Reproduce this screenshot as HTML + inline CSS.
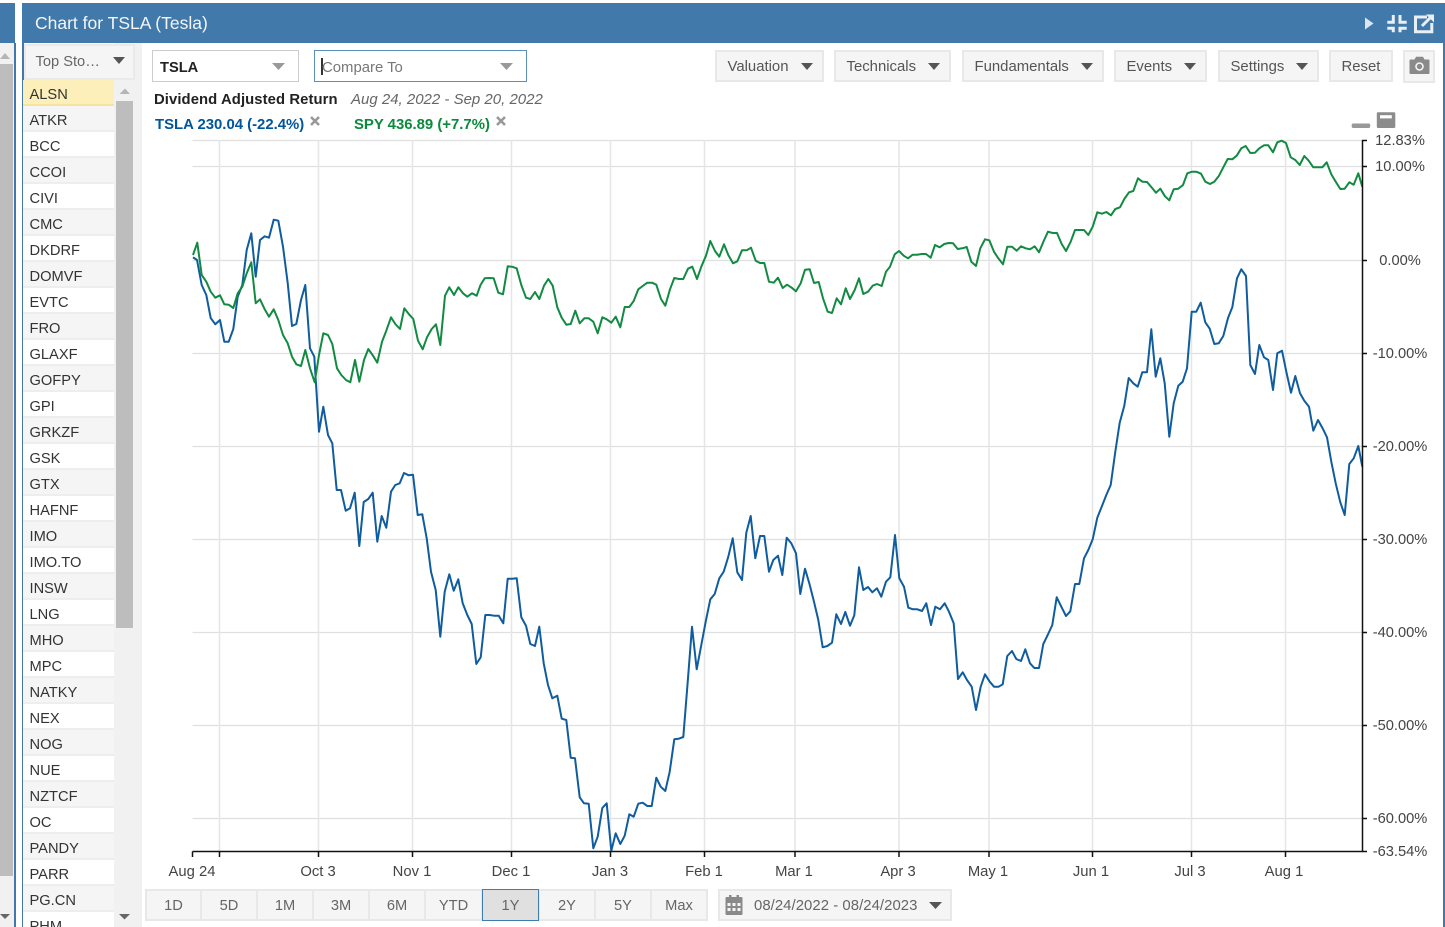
<!DOCTYPE html>
<html><head><meta charset="utf-8"><title>Chart for TSLA</title>
<style>
html,body{margin:0;padding:0;background:#fff;width:1445px;height:927px;overflow:hidden}
#w{width:1445px;height:927px;overflow:hidden;position:relative;font-family:"Liberation Sans",Arial,sans-serif;font-size:14.67px;color:#444}
.a{position:absolute;box-sizing:border-box}
.t{position:absolute;white-space:nowrap;line-height:18px}
.btn{position:absolute;box-sizing:border-box;top:50px;height:32px;background:#f5f5f5;border:2px solid #e8e8e8;color:#555;line-height:30px;padding-left:10.5px;white-space:nowrap;font-size:14.9px}
.btn i{position:absolute;top:11px;right:9px;width:0;height:0;border-left:6.5px solid transparent;border-right:6.5px solid transparent;border-top:7px solid #555}
.row{position:absolute;left:23px;width:91px;height:26px;box-sizing:border-box;border-bottom:2px solid #eee;padding-left:6.5px;line-height:31px;color:#333;background:#fff}
.row.o{background:#f5f5f5}
.rg{position:absolute;box-sizing:border-box;top:889px;height:32px;background:#f5f5f5;border:2px solid #e8e8e8;border-left-width:1px;border-right-width:1px;color:#666;text-align:center;line-height:30px}
.xl{position:absolute;top:863px;width:80px;text-align:center;line-height:18px;color:#444;font-size:14.8px}
.yl{position:absolute;left:1360px;width:80px;text-align:center;line-height:18px;color:#444}
</style></head><body><div id="w">

<!-- left sliver -->
<div class="a" style="left:0;top:3px;width:15px;height:40px;background:#4179ab"></div>
<div class="a" style="left:0;top:43px;width:14px;height:884px;background:#f1f1f1"></div>
<div class="a" style="left:14px;top:43px;width:1.5px;height:884px;background:#4179ab"></div>
<div class="a" style="left:0;top:64px;width:13px;height:812px;background:#bdbdbd"></div>
<svg class="a" style="left:0;top:50px" width="14" height="12"><path d="M0 9 L5 3 L10 9Z" fill="#b5b5b5"/></svg>
<svg class="a" style="left:0;top:912px" width="14" height="12"><path d="M0 2 L10 2 L5 7Z" fill="#666"/></svg>

<!-- main frame -->
<div class="a" style="left:22px;top:3px;width:1423px;height:40px;background:#4179ab"></div>
<div class="a" style="left:22px;top:43px;width:1.5px;height:884px;background:#4179ab"></div>
<div class="a" style="left:1443px;top:43px;width:1.5px;height:884px;background:#4179ab"></div>
<div class="t" style="left:35px;top:13px;font-size:17.5px;line-height:20px;color:#f2f6fa">Chart for TSLA (Tesla)</div>
<svg class="a" style="left:1360px;top:10px" width="80" height="28">
<path d="M5 7.5 L13.5 13.5 L5 19.5Z" fill="#dce6ef"/>
<g fill="none" stroke="#e8eff5" stroke-width="3">
<path d="M33.3 5 V12.3 H27.3"/><path d="M40 5 V12.3 H46.7"/><path d="M27.3 18.3 H33.3 V22.3"/><path d="M46.7 18.3 H40 V22.3"/>
<path d="M67 7 H55.5 V21.7 H71.8 V13"/></g>
<path d="M62 16 L71 7" stroke="#e8eff5" stroke-width="3" fill="none"/>
<path d="M66 4.5 H74 V12.5Z" fill="#e8eff5"/>
</svg>

<!-- sidebar -->
<div class="a" style="left:114px;top:43px;width:28px;height:884px;background:#f1f1f1"></div>
<div class="a" style="left:23.5px;top:44px;width:111px;height:36px;background:#f5f5f5;border:2px solid #eaeaea"></div>
<div class="t" style="left:35.5px;top:53px;color:#666">Top Sto…</div>
<svg class="a" style="left:112px;top:56px" width="14" height="9"><path d="M1 1H13L7 8Z" fill="#555"/></svg>
<div class="a" style="left:116px;top:101px;width:17px;height:527px;background:#bdbdbd"></div>
<svg class="a" style="left:118px;top:86px" width="14" height="10"><path d="M1.5 8 L7 2.5 L12 8Z" fill="#b5b5b5"/></svg>
<svg class="a" style="left:118px;top:912px" width="14" height="10"><path d="M1 2 L12 2 L6.5 7.5Z" fill="#666"/></svg>

<div class="row" style="top:80px;background:#fdefb9;border-bottom-color:#f7e3a0">ALSN</div>
<div class="row o" style="top:106px">ATKR</div>
<div class="row" style="top:132px">BCC</div>
<div class="row o" style="top:158px">CCOI</div>
<div class="row" style="top:184px">CIVI</div>
<div class="row o" style="top:210px">CMC</div>
<div class="row" style="top:236px">DKDRF</div>
<div class="row o" style="top:262px">DOMVF</div>
<div class="row" style="top:288px">EVTC</div>
<div class="row o" style="top:314px">FRO</div>
<div class="row" style="top:340px">GLAXF</div>
<div class="row o" style="top:366px">GOFPY</div>
<div class="row" style="top:392px">GPI</div>
<div class="row o" style="top:418px">GRKZF</div>
<div class="row" style="top:444px">GSK</div>
<div class="row o" style="top:470px">GTX</div>
<div class="row" style="top:496px">HAFNF</div>
<div class="row o" style="top:522px">IMO</div>
<div class="row" style="top:548px">IMO.TO</div>
<div class="row o" style="top:574px">INSW</div>
<div class="row" style="top:600px">LNG</div>
<div class="row o" style="top:626px">MHO</div>
<div class="row" style="top:652px">MPC</div>
<div class="row o" style="top:678px">NATKY</div>
<div class="row" style="top:704px">NEX</div>
<div class="row o" style="top:730px">NOG</div>
<div class="row" style="top:756px">NUE</div>
<div class="row o" style="top:782px">NZTCF</div>
<div class="row" style="top:808px">OC</div>
<div class="row o" style="top:834px">PANDY</div>
<div class="row" style="top:860px">PARR</div>
<div class="row o" style="top:886px">PG.CN</div>
<div class="row" style="top:912px">PHM</div>

<!-- inputs -->
<div class="a" style="left:152px;top:50px;width:147px;height:32px;border:1.5px solid #ccc;background:#fff"></div>
<div class="t" style="left:160px;top:59px;font-weight:bold;color:#222">TSLA</div>
<svg class="a" style="left:271px;top:62px" width="14" height="9"><path d="M1 1H14L7.5 8Z" fill="#999"/></svg>
<div class="a" style="left:314px;top:50px;width:213px;height:32px;border:1.5px solid #5a8ebc;background:#fff"></div>
<div class="a" style="left:321px;top:58px;width:1.5px;height:17px;background:#333"></div>
<div class="t" style="left:322px;top:59px;color:#777;font-size:14.9px">Compare To</div>
<svg class="a" style="left:499px;top:62px" width="14" height="9"><path d="M1 1H14L7.5 8Z" fill="#999"/></svg>

<!-- toolbar -->
<div class="btn" style="left:715px;width:109px">Valuation<i></i></div>
<div class="btn" style="left:834px;width:117px">Technicals<i></i></div>
<div class="btn" style="left:962px;width:142px">Fundamentals<i></i></div>
<div class="btn" style="left:1114px;width:93px">Events<i></i></div>
<div class="btn" style="left:1218px;width:101px">Settings<i></i></div>
<div class="btn" style="left:1329px;width:64px">Reset</div>
<div class="btn" style="left:1403px;width:32px;height:33px"></div>
<svg class="a" style="left:1409px;top:56px" width="21" height="19"><path d="M1.5 3.5H5.5L7 .8H14L15.5 3.5H19.5Q20.5 3.5 20.5 4.5V17Q20.5 18 19.5 18H1.5Q.5 18 .5 17V4.5Q.5 3.5 1.5 3.5Z" fill="#8a8a8a"/><circle cx="10.5" cy="10.5" r="4.3" fill="#f5f5f5"/><circle cx="10.5" cy="10.5" r="2.7" fill="#8a8a8a"/></svg>

<!-- legend -->
<div class="t" style="left:154px;top:91px;font-weight:bold;color:#222;font-size:14.83px;letter-spacing:.09px">Dividend Adjusted Return</div>
<div class="t" style="left:351px;top:91px;font-style:italic;color:#666;font-size:15px">Aug 24, 2022 - Sep 20, 2022</div>
<div class="t" style="left:155px;top:116px;font-weight:bold;color:#00559c;font-size:14.9px">TSLA 230.04 (-22.4%)</div>
<div class="t" style="left:354px;top:116px;font-weight:bold;color:#0a8a3c;font-size:14.9px">SPY 436.89 (+7.7%)</div>
<svg class="a" style="left:309px;top:115px" width="12" height="12"><path d="M2 2L10 10M10 2L2 10" stroke="#999" stroke-width="2.6"/></svg>
<svg class="a" style="left:495px;top:115px" width="12" height="12"><path d="M2 2L10 10M10 2L2 10" stroke="#999" stroke-width="2.6"/></svg>

<!-- chart -->
<svg class="a" style="left:0;top:0" width="1445" height="927">
<g stroke="#e0e0e0" stroke-width="1.3" fill="none">
<path d="M192.5 140.5H1362M192.5 166.5H1362M192.5 260.5H1362M192.5 353.5H1362M192.5 446.5H1362M192.5 539.5H1362M192.5 632.5H1362M192.5 725.5H1362M192.5 818.5H1362"/>
</g>
<g stroke="#e6e6e6" stroke-width="1.6" fill="none">
<path d="M219.5 140V852M318.5 140V852M412.5 140V852M511.5 140V852M610.5 140V852M704.5 140V852M795 140V852M899 140V852M989 140V852M1092.5 140V852M1191.5 140V852M1285.5 140V852"/>
</g>
<polyline fill="none" stroke="#0f5c9f" stroke-width="2" stroke-linejoin="round" points="193,257.3 197,260 201.7,285 206.3,295 210.7,318 215.3,324.3 220,320 224.3,341.7 228.7,341.7 233.3,329 237.7,296.7 242.3,285 246.7,250 251.3,233.3 255.7,276.7 260,240 264.7,236.3 269,237.7 273.7,219.7 278.3,220.7 283,246.7 287.7,283 292,326 296.3,324 301,300 305.3,285 310,348.3 314.3,356.7 319,431.7 323.3,406.7 328,435 332.3,443.3 336.7,490 341,490 345.7,510.7 350,508.3 354.7,492.7 359.3,546 363.7,502 368.3,499 372.7,492.7 377.3,541.7 381.7,516 386.3,527.7 391,491.7 395.3,485 399.7,483.3 404,473 408.7,475.3 413,474.7 417.7,515 422.3,514.3 426.7,538.3 431,571.7 435.7,590 440.3,636.7 444.7,591.7 449.3,574.3 453.7,590.7 458.3,579.3 462.7,603.3 467.3,615 471.7,624 476.3,664 480.7,657.3 485.3,615 489.7,615 494,615.7 498.7,615.7 503.3,623.3 507.7,578.7 512.3,578.7 516.7,578.3 521.3,617.3 526,625.7 530.3,644 535,646 539.3,626.7 543.7,663.3 548,685 552.3,698.3 557.3,695.7 561.7,718.7 566.3,720 570.7,757.7 575,758.3 579.7,797.3 584,803.3 588.7,803.7 593.3,848.3 597.7,836.7 602.3,808 606.7,803.3 611.3,850.7 615.7,833.3 620.3,844 624.7,835.7 629.3,814.3 633.7,816.7 638.3,803.7 642.7,802.7 647.3,806 651.7,806 656.3,777.7 660.7,786.7 665.3,791 669.7,771.7 674.3,739.3 678.7,738.7 683.3,737 687.7,682 692,626.7 696.7,669.3 701.3,645 705.7,621.7 710.3,599.3 714.7,594 719.3,578.3 723.7,571.7 728.3,556.7 732.7,538.3 737.3,572.3 742,580 746.3,532.7 750.7,516 755.3,558.3 760,536 764.3,536 769,571.7 773.3,560 778,555.7 782.3,575 786.7,537.7 791.3,543.3 796,553.3 800.3,594 805,568.7 809.3,583.3 814,601.7 818.3,620 822.7,647.3 827.3,646 832,642.7 836.3,614.3 841,624 845.3,612 850,625.7 854.3,615.3 859,567.3 863.3,590 868,587 872.3,592.3 877,588.3 881.3,596.7 886,581.7 890.3,577.3 895,535 899.3,578.3 904,586.7 908.3,607.7 913,609.3 917.3,609.3 922,611 926.3,603.3 931,625 935.3,606.7 940,609.3 944.7,603.3 949,611.7 953.7,623.3 958,679 962.7,672.3 967,680 971.7,686.7 976,710 980.7,686.7 985,674.3 989.7,681.7 994,686.7 998.7,686.7 1002.7,684.3 1007.3,656 1012,651 1016.3,659 1021,661 1025.3,649.3 1030,663.3 1034.3,668 1039,668 1043.3,644 1047.7,635 1052.3,625 1056.7,597.3 1061.3,606.7 1066,616 1070.3,611.3 1075,584 1079.3,584 1084,558.3 1088.3,550 1092.7,539.3 1097.3,517.7 1101.7,506.7 1106.3,495 1110.7,485 1115.3,451.7 1119.7,422.7 1124.3,405.7 1128.7,378 1133.3,383.3 1137.7,386.7 1142.3,372.3 1147,372.3 1151.3,329.3 1155.7,376.7 1160.3,358.3 1164.7,383.3 1169.3,436.7 1173.7,403.3 1178.3,385.7 1182.7,381.7 1187,368.3 1191.7,311.7 1196.3,311.7 1200.7,302.7 1205.3,322.3 1209.7,328.7 1214.3,344 1218.7,343.3 1223.3,336 1228,318 1232.3,307.3 1237,278.3 1241.3,269.3 1246,276 1250.3,365 1255,374 1259.3,345 1264,357.3 1268.3,360 1273,390 1277.3,353.3 1282,350.7 1286.3,371.7 1291,392.7 1295.3,376 1300,393.3 1304.3,400.7 1309,406.7 1313.3,430.7 1318,420 1322.3,427.7 1327,437.3 1331.3,461.7 1335.7,483.3 1340.3,502.3 1344.7,515 1349.3,464 1353.7,458.3 1358.3,446 1362.3,466.7"/>
<polyline fill="none" stroke="#128a42" stroke-width="2" stroke-linejoin="round" points="193,255 197.3,242.7 201.7,275 206.3,281.7 210.7,291.7 215.3,297.7 220,295.3 224.3,304.3 228.7,304.7 233.3,308 237.7,293.3 242.3,286.7 246.7,273.3 251.3,262.3 255.7,303.3 260,299.3 264.7,309.3 269,316.7 273.7,309.3 278.3,320 283,335 287.7,343.3 292,356.7 296.3,364.3 301,366 305.3,350 310,368.3 314.7,382.3 319,355 323.3,333.3 328,335 332.3,344 337,368.3 341.3,375 346,380 350.3,382.3 355,360 359.3,381.7 364,360 368.3,349 373,355.7 377.3,362.7 382,341.7 386.3,330.7 391,317.3 395.3,324 400,329 404.3,308.3 409,314.3 413.3,319 418,340.7 422.7,349.3 427,337.3 431.7,329 436,324.3 440.3,345 445,295.7 449.3,287.3 454,295 458.3,287.3 463,293.3 467.3,296.7 472,293.3 476.7,295.7 480.5,285 484.7,278.3 489,278 493.7,278.3 498.3,292.7 503,294.3 507.7,266.3 512,266.7 516.7,268.3 521.3,285 526,297.7 530.3,299 535,292 539.3,299 544,285.7 548.3,279 552.7,285.7 557.3,307.3 561.7,317.7 566.3,324.7 570.7,324 575.3,310.7 579.7,323.3 584.3,318.3 588.7,318.3 593.3,321.7 597.7,333.3 602.3,317.3 606.7,319.3 611.3,322.7 615.7,316.7 620.3,327.3 624.7,307 629.3,307 633.7,301 638.3,289.3 642.7,286 647.3,282.7 652,282.7 656.3,284.7 661,299 665.3,305.7 670,289.3 674.3,278 679,279 683.3,279 688,268.7 692.3,266.7 697,279 701.3,266.7 706,255.7 710.3,241 715,251 719.3,256.7 724,244.3 728.3,255 733,263.3 737.3,261.3 742,250.3 746.7,250.3 751,247.7 755.7,260.7 760,263 764.3,263 769,281.7 773.7,282.7 778,277.7 782.7,288 787,284.7 791.7,287.7 796,291.3 800.7,283.3 805,269.7 809.7,269.3 814,283 818.7,282 823,298.3 827.7,311.7 832,313 836.7,298.3 841,304.3 845.7,288.3 850,299 854.7,290 859,278.3 863.3,294 868,291.7 872.7,285.7 877,284 881.7,286 886,271.7 890,266.7 894.7,254.3 899,251 903.7,255.7 908,258.3 912.7,254.7 917,254.7 921.7,254 926,254 930.7,257.7 935,245 939.7,247.3 944.3,244 948.7,243 953,243.3 957.7,249 962.3,248.3 966.7,247 971.3,261.7 976,266 980.3,248.3 985,239.3 989.3,240.3 994,251.7 998.3,258.3 1003,264.3 1007.3,246.7 1012,246.7 1016.7,250.7 1021,246.3 1025.7,248.3 1030,249.3 1034.7,246.3 1039,252.3 1043.7,241 1048,231.7 1052.7,233 1057,233 1061.7,244 1066,251 1070.7,241.7 1075,230 1079.7,230 1084,230 1088.3,235 1092.7,226.7 1097.3,212.3 1102,213.7 1106.3,212 1111,215.3 1115.3,209 1120,207.3 1124.3,199 1129,192.3 1133.3,191 1138,178.3 1142.3,181.7 1147,182 1151.3,187 1156,192.7 1160.3,188.7 1165,196.3 1169.3,200.3 1173.7,189.3 1178.3,188.7 1183,185 1187.3,173.3 1192,171.7 1196.3,171.7 1201,173.7 1205.3,181.7 1210,184 1214.3,181.7 1219,175.7 1223.3,167.3 1227.7,159 1232.3,159.3 1236.7,155.7 1241.3,148.3 1245.7,146 1250.3,153 1255,152.7 1259.3,148.3 1264,145.3 1268.3,145.3 1273,152.3 1277.3,142.3 1281.7,140.7 1286,143 1290.7,157.3 1295.3,160 1299.7,165 1304.3,156 1308.7,160.7 1313.3,167.3 1317.7,167.3 1322.3,167.3 1326.7,162.3 1331.3,174.3 1335.7,181.7 1340.3,189 1344.7,188.7 1349.3,182.3 1353.7,184.7 1358.3,173.3 1362.3,186.7"/>
<g stroke="#111" stroke-width="1.5" fill="none">
<path d="M192.5 851.5H1362.5M1362.5 140V852"/>
<path d="M192.5 851.5V857M219.5 851.5V857M318.5 851.5V857M412.5 851.5V857M511.5 851.5V857M610.5 851.5V857M704.5 851.5V857M795 851.5V857M899 851.5V857M989 851.5V857M1092.5 851.5V857M1191.5 851.5V857M1285.5 851.5V857"/>
<path d="M1362 140.5H1367M1362 166.5H1367M1362 260.5H1367M1362 353.5H1367M1362 446.5H1367M1362 539.5H1367M1362 632.5H1367M1362 725.5H1367M1362 818.5H1367M1362 851.5H1367"/>
</g>
<rect x="1351.7" y="123.5" width="18.5" height="4.5" rx="1.5" fill="#999"/>
<path d="M1378 112.3H1394Q1395.3 112.3 1395.3 113.6V126.8Q1395.3 128 1394 128H1378Q1376.8 128 1376.8 126.8V113.6Q1376.8 112.3 1378 112.3Z" fill="#8c8c8c"/>
<rect x="1380" y="115.2" width="11.8" height="3.2" fill="#fff"/>
</svg>

<div class="yl" style="top:132px">12.83%</div>
<div class="yl" style="top:158px">10.00%</div>
<div class="yl" style="top:252px">0.00%</div>
<div class="yl" style="top:345px;">-10.00%</div>
<div class="yl" style="top:438px">-20.00%</div>
<div class="yl" style="top:531px">-30.00%</div>
<div class="yl" style="top:624px">-40.00%</div>
<div class="yl" style="top:717px">-50.00%</div>
<div class="yl" style="top:810px">-60.00%</div>
<div class="yl" style="top:843px">-63.54%</div>

<div class="xl" style="left:152px">Aug 24</div>
<div class="xl" style="left:278px">Oct 3</div>
<div class="xl" style="left:372px">Nov 1</div>
<div class="xl" style="left:471px">Dec 1</div>
<div class="xl" style="left:570px">Jan 3</div>
<div class="xl" style="left:664px">Feb 1</div>
<div class="xl" style="left:754px">Mar 1</div>
<div class="xl" style="left:858px">Apr 3</div>
<div class="xl" style="left:948px">May 1</div>
<div class="xl" style="left:1051px">Jun 1</div>
<div class="xl" style="left:1150px">Jul 3</div>
<div class="xl" style="left:1244px">Aug 1</div>

<!-- range -->
<div class="rg" style="left:145px;width:56px;border-left-width:2px">1D</div>
<div class="rg" style="left:201px;width:56px">5D</div>
<div class="rg" style="left:257px;width:56px">1M</div>
<div class="rg" style="left:313px;width:56px">3M</div>
<div class="rg" style="left:369px;width:56px">6M</div>
<div class="rg" style="left:425px;width:57px">YTD</div>
<div class="rg" style="left:482px;width:57px;background:#e0e0e0;border:1px solid #3f7cb0;line-height:32px">1Y</div>
<div class="rg" style="left:539px;width:56px">2Y</div>
<div class="rg" style="left:595px;width:56px">5Y</div>
<div class="rg" style="left:651px;width:57px;border-right-width:2px">Max</div>
<div class="a" style="left:718px;top:889px;width:234px;height:32px;background:#f5f5f5;border:2px solid #e8e8e8"></div>
<svg class="a" style="left:725px;top:894px" width="18" height="22"><path d="M1.5 3H4V1H6.5V3H11.5V1H14V3H16.5Q17.5 3 17.5 4V20Q17.5 21 16.5 21H1.5Q.5 21 .5 20V4Q.5 3 1.5 3Z" fill="#8a8a8a"/><g fill="#f5f5f5"><rect x="2.5" y="9" width="3" height="3"/><rect x="7.5" y="9" width="3" height="3"/><rect x="12.5" y="9" width="3" height="3"/><rect x="2.5" y="14" width="3" height="3"/><rect x="7.5" y="14" width="3" height="3"/><rect x="12.5" y="14" width="3" height="3"/></g></svg>
<div class="t" style="left:754px;top:897px;color:#666;font-size:14.9px;letter-spacing:.05px">08/24/2022 - 08/24/2023</div>
<svg class="a" style="left:928px;top:901px" width="14" height="9"><path d="M1 1H14L7.5 8Z" fill="#555"/></svg>
</div></body></html>
